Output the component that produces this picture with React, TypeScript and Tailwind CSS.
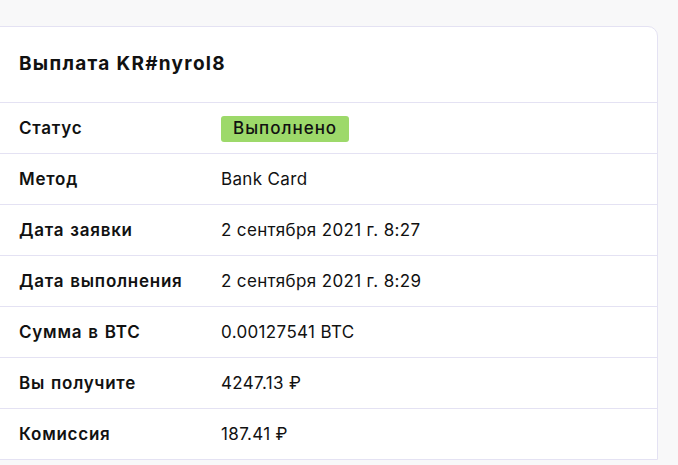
const rows: { label: string; value: string; badge?: boolean }[] = [
  { label: 'Статус', value: 'Выполнено', badge: true },
  { label: 'Метод', value: 'Bank Card' },
  { label: 'Дата заявки', value: '2 сентября 2021 г. 8:27' },
  { label: 'Дата выполнения', value: '2 сентября 2021 г. 8:29' },
  { label: 'Сумма в BTC', value: '0.00127541 BTC' },
  { label: 'Вы получите', value: '4247.13 ₽' },
  { label: 'Комиссия', value: '187.41 ₽' },
]

export default function App() {
  return (
    <div
      className="h-[465px] overflow-hidden bg-[#f8f8f9] pt-[26px] text-[#111]"
      style={{ fontFamily: 'Inter, "Noto Sans", sans-serif' }}
    >
      <div className="ml-[-12px] w-[670px] rounded-tr-[10px] border border-[#e4e2f3] bg-white">
        <div className="flex h-[75px] items-center pl-[30px] text-[19px] font-bold tracking-[1.3px]">
          Выплата KR#nyrol8
        </div>
        {rows.map((r) => (
          <div key={r.label} className="flex h-[51px] items-center border-t border-[#e4e2f3] pl-[30px] pt-[1px] text-[17px]">
            <div className="w-[202px] font-semibold tracking-[0.75px] [word-spacing:1px]">{r.label}</div>
            {r.badge ? (
              <span className="flex h-[26px] items-center rounded-[3px] bg-[#9dd96a] px-[12px] font-medium tracking-[1px]">
                {r.value}
              </span>
            ) : (
              <div className="tracking-[0.35px]">{r.value}</div>
            )}
          </div>
        ))}
      </div>
    </div>
  )
}
